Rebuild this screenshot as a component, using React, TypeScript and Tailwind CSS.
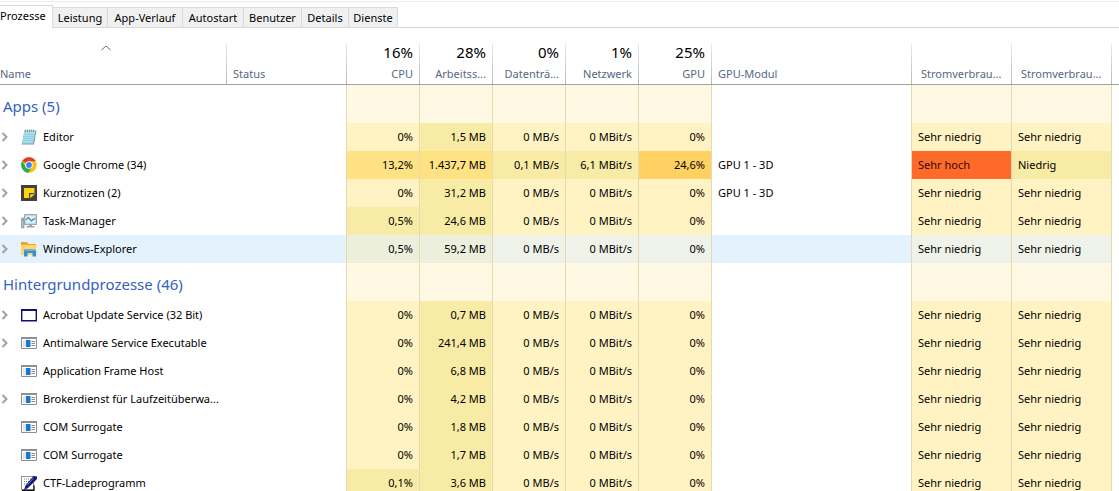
import type { ReactNode } from "react";
import clsx from "clsx";

type IconName = "notepad" | "chrome" | "notes" | "taskmgr" | "explorer" | "frame" | "app" | "ctf";

interface IProcess {
    name: string;
    icon: IconName;
    expandable?: boolean;
    selected?: boolean;
    // value and heat level of each column
    values: [string, number][];
    gpuModule?: string;
    power: [string, number][];
}

const tabs = ["Prozesse", "Leistung", "App-Verlauf", "Autostart", "Benutzer", "Details", "Dienste"];
const tabWidths = ["w-[53px]", "w-[55px]", "w-[75px]", "w-[61px]", "w-[58px]", "w-[47px]", "w-[49px]"];

const usage = [
    { total: "16%", label: "CPU" },
    { total: "28%", label: "Arbeitss..." },
    { total: "0%", label: "Datenträ..." },
    { total: "1%", label: "Netzwerk" },
    { total: "25%", label: "GPU" },
];

const veryLow: [string, number][] = [["Sehr niedrig", 0], ["Sehr niedrig", 0]];

const idle = (cpu: string, memory: string): [string, number][] => [
    [cpu, cpu === "0%" ? 0 : 1],
    [memory, 1],
    ["0 MB/s", 0],
    ["0 MBit/s", 0],
    ["0%", 0],
];

const apps: IProcess[] = [
    { name: "Editor", icon: "notepad", expandable: true, values: idle("0%", "1,5 MB"), power: veryLow },
    {
        name: "Google Chrome (34)",
        icon: "chrome",
        expandable: true,
        values: [["13,2%", 2], ["1.437,7 MB", 2], ["0,1 MB/s", 1], ["6,1 MBit/s", 1], ["24,6%", 3]],
        gpuModule: "GPU 1 - 3D",
        power: [["Sehr hoch", 4], ["Niedrig", 1]],
    },
    { name: "Kurznotizen (2)", icon: "notes", expandable: true, values: idle("0%", "31,2 MB"), gpuModule: "GPU 1 - 3D", power: veryLow },
    { name: "Task-Manager", icon: "taskmgr", expandable: true, values: idle("0,5%", "24,6 MB"), power: veryLow },
    { name: "Windows-Explorer", icon: "explorer", expandable: true, selected: true, values: idle("0,5%", "59,2 MB"), power: veryLow },
];

const background: IProcess[] = [
    { name: "Acrobat Update Service (32 Bit)", icon: "frame", expandable: true, values: idle("0%", "0,7 MB"), power: veryLow },
    { name: "Antimalware Service Executable", icon: "app", expandable: true, values: idle("0%", "241,4 MB"), power: veryLow },
    { name: "Application Frame Host", icon: "app", values: idle("0%", "6,8 MB"), power: veryLow },
    { name: "Brokerdienst für Laufzeitüberwa...", icon: "app", expandable: true, values: idle("0%", "4,2 MB"), power: veryLow },
    { name: "COM Surrogate", icon: "app", values: idle("0%", "1,8 MB"), power: veryLow },
    { name: "COM Surrogate", icon: "app", values: idle("0%", "1,7 MB"), power: veryLow },
    { name: "CTF-Ladeprogramm", icon: "ctf", values: idle("0,1%", "3,6 MB"), power: veryLow },
];

const heat = ["bg-[#fff3c4]", "bg-[#f8eba6]", "bg-[#ffe284]", "bg-[#ffd163]", "bg-[#ff6a2b] text-[#2e0d00]"];
const heatSelected = ["bg-[#eef2e8]", "bg-[#ebefdc]", "bg-[#ebefdc]", "bg-[#ebefdc]", "bg-[#ebefdc]"];

const icons: Record<IconName, ReactNode> = {
    notepad: (
        <>
            <path d="M3.500 1.500H15.500L13 15.500H.800z" fill="#6f9dad" />
            <path d="M3.500 2H14.500L12 14.500H1.200z" fill="#a9dcea" />
            <path d="M3.300 5.500h10M3 7.500h10M2.600 9.500h10M2.200 11.500h10" stroke="#8cc6d8" strokeWidth=".6" />
            <path d="M4.500 .5v2.500M6.500 .5v2.500M8.500 .5v2.500M10.500 .5v2.500M12.500 .5v2.500" stroke="#7b8a90" strokeWidth=".8" />
        </>
    ),
    chrome: (
        <>
            <circle cx="8" cy="8" r="7.800" fill="#fbc116" />
            <path d="M8 8L1.240 4.100A7.800 7.800 0 0 1 14.760 4.100z" fill="#e33b2e" />
            <path d="M1.240 4.100A7.800 7.800 0 0 0 7.300 15.770L11.200 9.900 4.700 9.900z" fill="#2da94f" />
            <path d="M8 4.200h6.760L11.200 9.900z" fill="#fbc116" />
            <circle cx="8" cy="8" r="3.800" fill="#fff" />
            <circle cx="8" cy="8" r="2.900" fill="#3f82ee" />
        </>
    ),
    notes: (
        <>
            <path d="M0 0h16v16H0z" fill="#43403f" />
            <path d="M3 3h10.500v6.500L9.500 13H3z" fill="#fcd60c" />
            <path d="M8 8h5.500L8 13.500z" fill="#43403f" />
            <path d="M9.200 9.200h3.600L9.200 12.800z" fill="#fcd60c" />
        </>
    ),
    taskmgr: (
        <>
            <path d="M.5 5h2.500v10H.5z" fill="#b8bcbf" stroke="#7c8387" strokeWidth=".6" />
            <path d="M1 7h1.500" stroke="#55a367" />
            <path d="M3.500 1.500h12v10h-12z" fill="#d9dee1" stroke="#8d969b" strokeWidth=".8" />
            <path d="M4.700 2.700h9.600v7.500H4.700z" fill="#e6f6fd" stroke="#8fc0d6" strokeWidth=".5" />
            <path d="M5 7l2.200-2.500L10.500 8l2-2h1.800" fill="none" stroke="#287fa8" strokeWidth="1.100" />
            <path d="M8 11.500h3v1.500h2.500v1.500h-8V13H8z" fill="#9da4a8" />
        </>
    ),
    explorer: (
        <>
            <path d="M0 1h6l1.500 2H15v3H0z" fill="#e8a72c" />
            <path d="M0 4h15.500v10H0z" fill="#fcd56c" />
            <path d="M3 8.500h11l1 1v6H11.500v-3.500h-5v3.500H3z" fill="#3b8fd2" />
            <path d="M3 8.500h11l1 1.500H3z" fill="#63b2e8" />
        </>
    ),
    frame: (
        <>
            <path d="M.700 2.700h14.600v11H.700z" fill="#fff" stroke="#10107c" strokeWidth="1.400" />
            <path d="M0 3h16" stroke="#10107c" strokeWidth="2" />
        </>
    ),
    app: (
        <>
            <path d="M.5 2.500h15v11H.5z" fill="#fff" stroke="#8d9194" />
            <path d="M0 3h16" stroke="#8d9194" strokeWidth="2" />
            <path d="M2 5h3v7H2z" fill="#e3e6e8" />
            <path d="M5 5h4.500v7H5z" fill="#1677cb" />
            <path d="M10.500 6.500H14M10.500 8.500H14M10.500 10.500H14" stroke="#858b90" />
        </>
    ),
    ctf: (
        <>
            <path d="M.5 1.500h12v13H.5z" fill="#fff" stroke="#222" strokeDasharray="1 1" />
            <path d="M3 4h8M3 6.500h6M3 9h4" stroke="#777" strokeDasharray="1 1" />
            <path d="M3 15l1.500-4.500L12.500 1 16 1.500V4L7 13z" fill="#15157e" />
            <path d="M6 10.500L12.500 3" stroke="#6876cc" />
            <path d="M1 15.300h12v-5" fill="none" stroke="#111" strokeWidth="1.300" />
        </>
    ),
};

const divider = "bg-[linear-gradient(to_top,#b8b8b8,#ececec)] bg-[length:1px_100%] bg-right bg-no-repeat";

const HeaderCell = ({ total, label, align = "left", className }: { total?: string; label: string; align?: "left" | "right"; className?: string }) => (
    <th scope="col" className={clsx("h-[42px] border-b border-[#a0a0a0] p-0 font-normal", divider, className)}>
        <button type="button" className={clsx("flex w-full flex-col whitespace-nowrap", align === "right" ? "items-end pr-[7px]" : "items-start")}>
            <span className="h-5 text-[15px] leading-4 text-black">{total}</span>
            <span className="h-5 leading-5 text-[#56677f]">{label}</span>
        </button>
    </th>
);

const GroupRow = ({ title }: { title: string }) => (
    <tr className="h-[38px]">
        <th scope="colgroup" colSpan={2} className="border-r border-[#e6dbb0] p-0 pt-1 pl-[3px] text-left text-[15px] font-normal text-[#3462c0]">
            {title}
        </th>
        {usage.map(({ label }) => (
            <td key={label} className="border-r border-[#e6dbb0] bg-[#fff8e2]" />
        ))}
        <td className="border-r border-[#e6dbb0]" />
        <td className="border-r border-[#e6dbb0] bg-[#fff8e2]" />
        <td className="border-r border-[#e6dbb0] bg-[#fff8e2]" />
        <td />
    </tr>
);

const ProcessRow = ({ process }: { process: IProcess }) => {
    const levels = process.selected ? heatSelected : heat;

    return (
        <tr className={clsx("h-7 whitespace-nowrap", process.selected && "bg-[#e4f2fe]")}>
            <td className="p-0">
                <div className="flex items-center">
                    <div className="flex w-[21px] shrink-0 pl-px">
                        {process.expandable && (
                            <button type="button" aria-label={`${process.name} erweitern`}>
                                <svg viewBox="0 0 8 10" className="h-2.5 w-2" fill="none" stroke="#a0a0a0" strokeWidth="2">
                                    <path d="M1.500 1l4 4-4 4" />
                                </svg>
                            </button>
                        )}
                    </div>
                    <svg viewBox="0 0 16 16" className="mr-1.5 size-4 shrink-0" aria-hidden="true">
                        {icons[process.icon]}
                    </svg>
                    <span>{process.name}</span>
                </div>
            </td>
            <td className="border-r border-[#e6dbb0] p-0" />
            {process.values.map(([value, level], i) => (
                <td key={i} className={clsx("border-r border-[#e6dbb0] p-0 pr-1.5 text-right", levels[level])}>
                    {value}
                </td>
            ))}
            <td className="border-r border-[#e6dbb0] p-0 pl-1.5">{process.gpuModule}</td>
            {process.power.map(([value, level], i) => (
                <td key={i} className={clsx("border-r border-[#e6dbb0] p-0 pl-1.5", levels[level])}>
                    {value}
                </td>
            ))}
            <td className="bg-white p-0" />
        </tr>
    );
};

const App = () => {
    return (
        <main className="flex h-screen flex-col overflow-hidden bg-white pt-px font-['Noto_Sans',sans-serif] text-[11px] leading-4 text-black">
            <div className="h-px shrink-0 bg-[#ececec]" />
            <div role="tablist" className="mt-[3px] flex h-[23px] shrink-0 items-end">
                {tabs.map((tab, i) => (
                    <button
                        key={tab}
                        type="button"
                        role="tab"
                        aria-selected={i === 0}
                        className={clsx(
                            "flex shrink-0 border-r border-t border-[#d9d9d9] pt-0.5 whitespace-nowrap",
                            tabWidths[i],
                            i === 0 ? "h-[23px] bg-white" : "h-[21px] justify-center border-b bg-[#f0f0f0]",
                        )}
                    >
                        {tab}
                    </button>
                ))}
                <div className="grow border-b border-[#d9d9d9]" />
            </div>
            <table className="mt-[15px] w-full table-fixed border-separate border-spacing-0">
                <colgroup>
                    <col className="w-[227px]" />
                    <col className="w-[120px]" />
                    {usage.map(({ label }) => (
                        <col key={label} className="w-[73px]" />
                    ))}
                    <col className="w-[200px]" />
                    <col className="w-[100px]" />
                    <col className="w-[100px]" />
                    <col />
                </colgroup>
                <thead>
                    <tr>
                        <th scope="col" aria-sort="ascending" className={clsx("h-[42px] border-b border-[#a0a0a0] p-0 font-normal", divider)}>
                            <button type="button" className="flex w-full flex-col items-start">
                                <span className="flex h-5 w-full justify-center pt-px pr-4">
                                    <svg viewBox="0 0 10 6" className="h-1.5 w-2.5" fill="none" stroke="#6b6b6b">
                                        <path d="M.5 5L5 1l4.500 4" />
                                    </svg>
                                </span>
                                <span className="h-5 leading-5 text-[#56677f]">Name</span>
                            </button>
                        </th>
                        <HeaderCell label="Status" className="pl-1.5" />
                        {usage.map(({ total, label }) => (
                            <HeaderCell key={label} total={total} label={label} align="right" />
                        ))}
                        <HeaderCell label="GPU-Modul" className="pl-1.5" />
                        <HeaderCell label="Stromverbrau..." className="pl-[9px]" />
                        <HeaderCell label="Stromverbrau..." className="pl-[9px]" />
                        <td className="border-b border-[#a0a0a0] p-0" />
                    </tr>
                </thead>
                <tbody>
                    <GroupRow title="Apps (5)" />
                    {apps.map((process, i) => (
                        <ProcessRow key={i} process={process} />
                    ))}
                </tbody>
                <tbody>
                    <GroupRow title="Hintergrundprozesse (46)" />
                    {background.map((process, i) => (
                        <ProcessRow key={i} process={process} />
                    ))}
                </tbody>
            </table>
        </main>
    );
};

export default App;
